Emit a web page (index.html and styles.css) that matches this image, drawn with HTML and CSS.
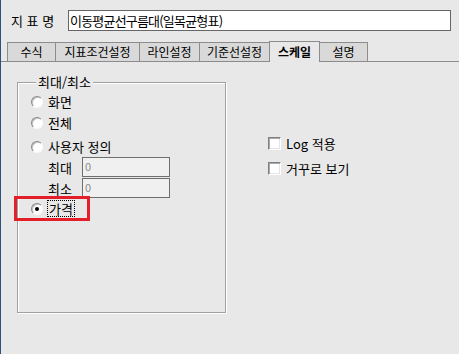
FILE: index.html
```html
<!DOCTYPE html>
<html lang="ko">
<head>
    <meta charset="UTF-8">
    <title>지표 설정</title>
    <link rel="stylesheet" href="styles.css">
</head>
<body>

    <!-- 지표명 -->
    <div class="name-row">
        <span class="name-label">지 표 명</span>
        <input class="name-input" type="text" value="이동평균선구름대(일목균형표)">
    </div>

    <!-- 탭 -->
    <div class="tabs">
        <div class="tab">수식</div>
        <div class="tab">지표조건설정</div>
        <div class="tab">라인설정</div>
        <div class="tab">기준선설정</div>
        <div class="tab active">스케일</div>
        <div class="tab">설명</div>
    </div>

    <!-- 스케일 탭 내용 -->
    <div class="panel">
        <fieldset class="range-group">
            <legend>최대/최소</legend>
            <label class="radio-row"><span class="radio"></span>화면</label>
            <label class="radio-row"><span class="radio"></span>전체</label>
            <label class="radio-row user"><span class="radio"></span>사용자 정의</label>
            <div class="value-row">
                <span class="value-label">최대</span>
                <input class="value-input" type="text" value="0" readonly>
            </div>
            <div class="value-row second">
                <span class="value-label">최소</span>
                <input class="value-input" type="text" value="0" readonly>
            </div>
            <label class="radio-row"><span class="radio on"></span><span class="focus">가격</span></label>
        </fieldset>

        <div class="options">
            <label class="check-row"><span class="checkbox"></span>Log 적용</label>
            <label class="check-row"><span class="checkbox"></span>거꾸로 보기</label>
        </div>
    </div>

    <div class="highlight"></div>

</body>
</html>
```

FILE: styles.css
```css
body {
    margin: 0;
    height: 354px;
    box-sizing: border-box;
    border-left: 1px solid #2e5378; /* window edge */
    background-color: #e8e8e8;
    color: #000;
    font-family: "Noto Sans CJK KR", "Noto Sans", sans-serif;
    font-size: 13px;
    position: relative;
    overflow: hidden;
}

/* 지표명 */
.name-row {
    display: flex;
    align-items: center;
    padding: 10px 0 0 10px;
}

.name-label {
    width: 57px;
    line-height: 21px;
}

.name-input {
    width: 383px;
    height: 21px;
    box-sizing: border-box;
    margin: 0;
    padding: 0 1px;
    border: 1px solid #666;
    background-color: #fff;
    font-family: inherit;
    font-size: 13px;
    letter-spacing: -0.8px;
    color: #000;
    outline: none;
}

/* 탭 */
.tabs {
    display: flex;
    align-items: flex-end;
    margin-top: 10px;
    padding-left: 6px;
    border-bottom: 1px solid #8c8c8c;
    font-size: 12px;
}

.tab {
    height: 19px;
    width: 49px;
    box-sizing: border-box;
    margin-left: -1px;
    border: 1px solid #8c8c8c;
    border-bottom: none;
    background-color: #d9d9d9;
    text-align: center;
    line-height: 17px;
    white-space: nowrap;
}

.tab:first-child {
    margin-left: 0;
}

.tab:nth-child(2) { width: 85px; }
.tab:nth-child(3) { width: 61px; }
.tab:nth-child(4) { width: 71px; }

.tab.active {
    height: 21px;
    width: 51px;
    margin-bottom: -1px;
    background-color: #e8e8e8;
    font-weight: bold;
    line-height: 19px;
    position: relative;
}

/* 내용 */
.panel {
    display: flex;
    align-items: flex-start;
    margin-top: 13px;
    padding-left: 16px;
}

.range-group {
    width: 209px;
    height: 238px;
    box-sizing: border-box;
    margin: 0;
    padding: 2px 0 0 13px;
    border: 1px solid #a0a0a0;
    box-shadow: 1px 1px 0 #fff, inset 1px 1px 0 #fff;
}

.range-group legend {
    margin-left: 5px;
    padding: 0 2px;
    line-height: 14px;
    background-color: #e8e8e8;
}

.radio-row {
    display: flex;
    align-items: center;
    gap: 5px;
    height: 21px;
}

.radio-row.user {
    margin-top: 3px;
}

.radio {
    width: 12px;
    height: 12px;
    box-sizing: border-box;
    border-radius: 50%;
    border: 1px solid;
    border-color: #888 #fafafa #fafafa #888;
    background-color: #fff;
    box-shadow: inset 1px 1px 0 #c4c4c4;
    display: flex;
    align-items: center;
    justify-content: center;
}

.radio.on::after {
    content: "";
    width: 4px;
    height: 4px;
    border-radius: 50%;
    background-color: #000;
}

.focus {
    margin-left: -1px;
    padding: 0 1px;
    border: 1px dotted #000;
    line-height: 15px;
}

.value-row {
    display: flex;
    align-items: center;
    height: 20px;
    padding-left: 17px;
}

.value-row.second {
    margin-top: 1px;
}

.value-label {
    width: 34px;
}

.value-input {
    width: 88px;
    height: 20px;
    box-sizing: border-box;
    margin: 0;
    padding: 0 2px 3px;
    border: 1px solid #6e6e6e;
    background-color: #f0f0f0;
    color: #8a8a8a;
    font-family: inherit;
    font-size: 11px;
    outline: none;
}

.options {
    display: flex;
    flex-direction: column;
    gap: 5px;
    margin: 58px 0 0 42px;
}

.check-row {
    display: flex;
    align-items: center;
    gap: 5px;
    height: 20px;
}

.checkbox {
    width: 13px;
    height: 13px;
    box-sizing: border-box;
    border: 1px solid;
    border-color: #808080 #fff #fff #808080;
    background-color: #fff;
    box-shadow: inset 1px 1px 0 #a8a8a8, inset -1px -1px 0 #e4e4e4;
}

/* 강조 표시 */
.highlight {
    position: absolute;
    left: 13px;
    top: 196px;
    width: 76px;
    height: 25px;
    box-sizing: border-box;
    border: 3px solid #e3202a;
}
```
